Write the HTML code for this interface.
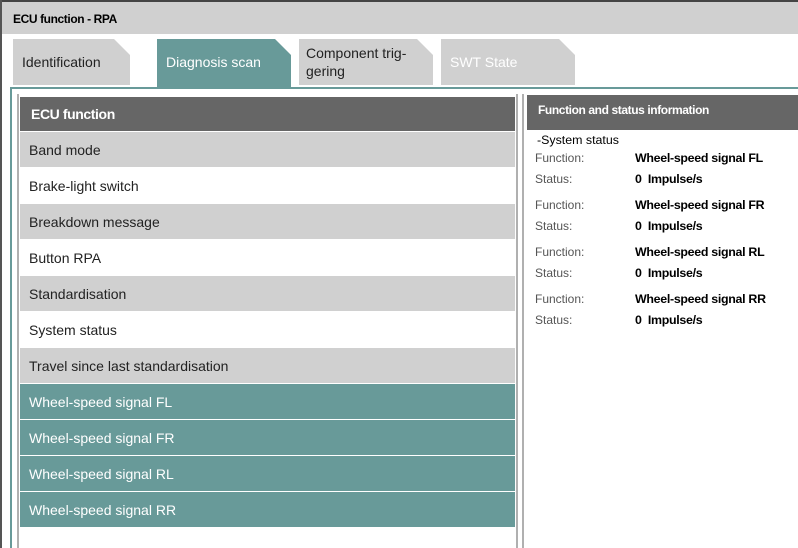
<!DOCTYPE html>
<html><head><style>
*{margin:0;padding:0;box-sizing:border-box}
body{width:798px;height:548px;overflow:hidden;background:#fff;font-family:"Liberation Sans",Arial,sans-serif;position:relative}
.abs{position:absolute}
.tab{position:absolute;top:39px;height:46px;background:#d0d0d0;font-size:14px;color:#222;padding-left:9px;display:flex;align-items:center;clip-path:polygon(0 0,calc(100% - 16px) 0,100% 16px,100% 100%,0 100%)}
.row{position:absolute;left:20px;width:495px;height:35px;font-size:14px;color:#222;padding-left:9px;line-height:37px}
.g{background:#d0d0d0}.t{background:#689a99;color:#fff}
.lab{position:absolute;left:535px;font-size:12px;color:#555}
.val{position:absolute;left:635px;font-size:12.4px;color:#000;font-weight:bold;letter-spacing:-0.3px}
</style></head><body>
<div class="abs" style="left:0;top:0;width:798px;height:2px;background:#444"></div>
<div class="abs" style="left:0;top:0;width:2px;height:548px;background:#555"></div>
<div class="abs" style="left:2px;top:2px;width:796px;height:32px;background:#d0d0d0;font-size:12px;font-weight:bold;padding:10px 0 0 11px;letter-spacing:-0.4px">ECU function - RPA</div>
<div class="tab" style="left:13px;width:117px">Identification</div>
<div class="tab" style="left:157px;width:134px;height:50px;background:#689a99;color:#fff;align-items:flex-start;padding-top:15px">Diagnosis scan</div>
<div class="tab" style="left:299px;width:134px;line-height:18px;padding-left:7px">Component trig-<br>gering</div>
<div class="tab" style="left:441px;width:134px;color:#fff">SWT State</div>
<div class="abs" style="left:10px;top:87px;width:788px;height:2px;background:#689a99"></div>
<div class="abs" style="left:10px;top:87px;width:2px;height:461px;background:#689a99"></div>
<div class="abs" style="left:17px;top:94px;width:2px;height:454px;background:#b0b0b0"></div>
<div class="abs" style="left:516px;top:94px;width:2px;height:454px;background:#b0b0b0"></div>
<div class="abs" style="left:522px;top:94px;width:2px;height:454px;background:#b0b0b0"></div>
<div class="abs" style="left:20px;top:97px;width:495px;height:34px;background:#666;color:#fff;font-size:14px;font-weight:bold;padding-left:11px;line-height:34px;letter-spacing:-0.4px">ECU function</div>
<div class="row g" style="top:132px">Band mode</div>
<div class="row" style="top:168px">Brake-light switch</div>
<div class="row g" style="top:204px">Breakdown message</div>
<div class="row" style="top:240px">Button RPA</div>
<div class="row g" style="top:276px">Standardisation</div>
<div class="row" style="top:312px">System status</div>
<div class="row g" style="top:348px">Travel since last standardisation</div>
<div class="row t" style="top:384px">Wheel-speed signal FL</div>
<div class="row t" style="top:420px">Wheel-speed signal FR</div>
<div class="row t" style="top:456px">Wheel-speed signal RL</div>
<div class="row t" style="top:492px">Wheel-speed signal RR</div>
<div class="abs" style="left:527px;top:95px;width:271px;height:35px;background:#666;color:#fff;font-size:12px;font-weight:bold;padding-left:11px;line-height:31px;letter-spacing:-0.4px">Function and status information</div>
<div class="abs" style="left:537px;top:133px;font-size:12.4px;color:#000">-System status</div>
<div class="lab" style="top:151px">Function:</div><div class="val" style="top:151px">Wheel-speed signal FL</div>
<div class="lab" style="top:172px">Status:</div><div class="val" style="top:172px">0&nbsp; Impulse/s</div>
<div class="lab" style="top:198px">Function:</div><div class="val" style="top:198px">Wheel-speed signal FR</div>
<div class="lab" style="top:219px">Status:</div><div class="val" style="top:219px">0&nbsp; Impulse/s</div>
<div class="lab" style="top:245px">Function:</div><div class="val" style="top:245px">Wheel-speed signal RL</div>
<div class="lab" style="top:266px">Status:</div><div class="val" style="top:266px">0&nbsp; Impulse/s</div>
<div class="lab" style="top:292px">Function:</div><div class="val" style="top:292px">Wheel-speed signal RR</div>
<div class="lab" style="top:313px">Status:</div><div class="val" style="top:313px">0&nbsp; Impulse/s</div>
</body></html>
